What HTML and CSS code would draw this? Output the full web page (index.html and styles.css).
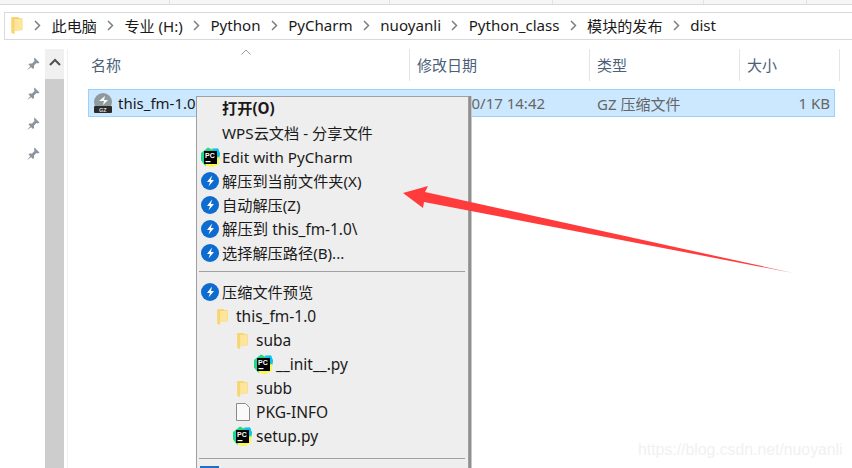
FILE: index.html
```html
<!DOCTYPE html>
<html lang="zh-CN">
<head>
<meta charset="utf-8">
<title>dist</title>
<link rel="stylesheet" href="styles.css">
</head>
<body>
<svg class="defs" width="0" height="0" aria-hidden="true">
  <defs>
    <symbol id="folder" viewBox="0 0 12 18">
      <path d="M1 1h7l1 2h3v11l-8 1H1z" fill="#f8d775"/>
      <path d="M1 3h10.500v10.500L4 15v3l-3-1z" fill="#fde59a"/>
      <path d="M1 2v15l3 1V3h8V2z" fill="#f6cd5f" opacity=".65"/>
    </symbol>
    <symbol id="pc" viewBox="0 0 20 20">
      <path d="M1 6 8 .5l4 2 6-1 2 6-2 9-5 3-8-1-4-5z" fill="#21d789"/>
      <path d="M12 1.500l6 0 2 5-1 3-4-1z" fill="#07c3f2"/>
      <path d="M5 15l14-5 0 7-6 3-7-1z" fill="#fcf84a"/>
      <rect x="4" y="4" width="13" height="13" fill="#000"/>
      <text x="5" y="11" class="pc-text">PC</text>
      <rect x="5.500" y="14" width="5" height="1.200" fill="#fff"/>
    </symbol>
    <symbol id="zip" viewBox="0 0 18 18">
      <circle cx="9" cy="9" r="9" fill="#0f6ccf"/>
      <path d="M11 3.500 6 10h3l-1.500 4.500L13 8h-3z" fill="#fff"/>
    </symbol>
    <symbol id="pin" viewBox="0 0 14 14">
      <path d="M8.500 0.500 13.500 5.500 12 6.500 10.500 6 8 8.500 8 11 7 12 2.500 7.500 3.500 6.500 6 6.500 8.500 4 8 2z" fill="#8c959e"/>
      <path d="M4.500 9 1 13 5.500 10z" fill="#8c959e"/>
    </symbol>
    <symbol id="chev" viewBox="0 0 7 11">
      <path d="M1 1l4.500 4.500L1 10" fill="none" stroke="#7f7f7f" stroke-width="1.500"/>
    </symbol>
  </defs>
</svg>

<div class="tabs">
  <span class="tab tab-a"></span><span class="tab tab-b"></span><span class="tab tab-c"></span><span class="tab tab-d"></span><span class="tab tab-e"></span>
</div>

<nav class="address">
  <svg class="addr-folder"><use href="#folder"/></svg>
  <svg class="chev"><use href="#chev"/></svg><span>此电脑</span>
  <svg class="chev"><use href="#chev"/></svg><span>专业 (H:)</span>
  <svg class="chev"><use href="#chev"/></svg><span>Python</span>
  <svg class="chev"><use href="#chev"/></svg><span>PyCharm</span>
  <svg class="chev"><use href="#chev"/></svg><span>nuoyanli</span>
  <svg class="chev"><use href="#chev"/></svg><span>Python_class</span>
  <svg class="chev"><use href="#chev"/></svg><span>模块的发布</span>
  <svg class="chev"><use href="#chev"/></svg><span>dist</span>
</nav>

<main class="explorer">
  <aside class="pins">
    <svg class="pin"><use href="#pin"/></svg>
    <svg class="pin"><use href="#pin"/></svg>
    <svg class="pin"><use href="#pin"/></svg>
    <svg class="pin"><use href="#pin"/></svg>
  </aside>
  <div class="scrollbar">
    <div class="scroll-up"><svg class="scroll-chev" viewBox="0 0 12 8"><path d="M1 7l5-5 5 5" fill="none" stroke="#505050" stroke-width="2"/></svg></div>
    <div class="scroll-thumb"></div>
  </div>
  <section class="files">
    <header class="cols">
      <div class="col col-name"><span>名称</span><svg class="sort" viewBox="0 0 10 6"><path d="M.5 5.500 5 1l4.500 4.500" fill="none" stroke="#9aa0a6"/></svg></div>
      <div class="col col-date"><span>修改日期</span></div>
      <div class="col col-type"><span>类型</span></div>
      <div class="col col-size"><span>大小</span></div>
    </header>
    <div class="row">
      <div class="cell col-name name-cell">
        <svg class="gz" viewBox="0 0 20 20">
          <circle cx="10" cy="9" r="9" fill="#8e9a9e"/>
          <path d="M12 3 6 8l5 0-1 4 5-5-4 0z" fill="#fff"/>
          <rect x="1" y="13" width="18" height="7" rx="1" fill="#2b2b2b"/>
          <text x="6" y="18.600" class="gz-text">GZ</text>
        </svg>
        <span>this_fm-1.0</span>
      </div>
      <div class="cell col-date">2019/10/17 14:42</div>
      <div class="cell col-type">GZ 压缩文件</div>
      <div class="cell col-size size-cell">1 KB</div>
    </div>
  </section>
</main>

<div class="menu">
  <div class="item strong"><span class="label">打开(O)</span></div>
  <div class="item"><span class="label">WPS云文档 - 分享文件</span></div>
  <div class="item latin edit"><svg class="ico pc-ico"><use href="#pc"/></svg><span>Edit with PyCharm</span></div>
  <div class="item"><svg class="ico"><use href="#zip"/></svg><span>解压到当前文件夹(X)</span></div>
  <div class="item"><svg class="ico"><use href="#zip"/></svg><span>自动解压(Z)</span></div>
  <div class="item wide"><svg class="ico"><use href="#zip"/></svg><span>解压到 this_fm-1.0\</span></div>
  <div class="item"><svg class="ico"><use href="#zip"/></svg><span>选择解压路径(B)...</span></div>
  <div class="sep sep-a"></div>
  <div class="item"><svg class="ico"><use href="#zip"/></svg><span>压缩文件预览</span></div>
  <div class="item latin lvl-1"><svg class="tree-folder"><use href="#folder"/></svg><span>this_fm-1.0</span></div>
  <div class="item latin lvl-2"><svg class="tree-folder"><use href="#folder"/></svg><span>suba</span></div>
  <div class="item latin lvl-3"><svg class="ico pc-ico"><use href="#pc"/></svg><span>__init__.py</span></div>
  <div class="item latin lvl-2"><svg class="tree-folder"><use href="#folder"/></svg><span>subb</span></div>
  <div class="item latin lvl-2"><svg class="doc" viewBox="0 0 14 18"><path d="M.5.500h9l4 4v13H.5z" fill="#fafafa" stroke="#8a8a8a"/></svg><span>PKG-INFO</span></div>
  <div class="item latin lvl-4"><svg class="ico pc-ico"><use href="#pc"/></svg><span>setup.py</span></div>
  <div class="sep sep-b"></div>
  <div class="tail-icon"></div>
</div>

<svg class="arrow" viewBox="0 0 852 468" aria-hidden="true">
  <path d="M403 193 428 186 425 192 793 273 424 202 423 208z" fill="#ff3b3b"/>
</svg>

<div class="watermark">https://blog.csdn.net/nuoyanli</div>
</body>
</html>
```

FILE: styles.css
```css
* { box-sizing: border-box; }
html, body { margin: 0; height: 468px; overflow: hidden; background: #fff; }
body {
  position: relative;
  width: 852px;
  font-family: "Noto Sans", "Noto Sans CJK SC", sans-serif;
  font-size: 15px;
  color: #1a1a1a;
}
.defs { position: absolute; }
.pc-text { font: 700 7px "Liberation Sans", sans-serif; fill: #fff; }
.gz-text { font: 700 5.500px "Liberation Sans", sans-serif; fill: #ddd; }

.tabs { display: flex; height: 5px; background: #f5f6f7; border-bottom: 1px solid #d9d9d9; }
.tab { border-right: 1px solid #e3e3e3; }
.tab-a { width: 170px; }
.tab-b { width: 220px; }
.tab-c { width: 163px; }
.tab-d { width: 151px; }
.tab-e { width: 103px; }

.address {
  display: flex;
  align-items: center;
  gap: 10.300px;
  height: 28px;
  margin: 7px 0 0 4px;
  padding: 0 0 2px 5px;
  border: 1px solid #d9d9d9;
  border-right: 0;
  font-size: 15.100px;
  white-space: nowrap;
}
.addr-folder { width: 13px; height: 18px; margin-right: 1px; }
.chev { width: 7px; height: 11px; flex: none; }

.explorer { display: flex; height: 428px; margin-top: 9px; }
.pins { width: 45px; display: flex; flex-direction: column; padding: 8px 0 0 26px; gap: 16px; }
.pin { width: 14px; height: 14px; }
.scrollbar { width: 19px; display: flex; flex-direction: column; }
.scroll-up { height: 30px; background: #f0f0f0; display: flex; justify-content: center; padding-top: 9px; }
.scroll-chev { width: 12px; height: 8px; }
.scroll-thumb { flex: 1; background: #cdcdcd; }

.files { flex: 1; margin-left: 3px; border-left: 1px solid #f0f0f0; }
.cols { display: flex; height: 32px; align-items: center; color: #4c607a; }
.col { height: 32px; display: flex; align-items: center; padding: 0 0 2px 7px; border-right: 1px solid #e5e5e5; position: relative; }
.col-name { width: 342px; padding-left: 23px; }
.col-date { width: 180px; }
.col-type { width: 150px; }
.col-size { width: 100px; }
.sort { position: absolute; left: 173px; top: 0; width: 10px; height: 6px; }
.row {
  display: flex;
  height: 28px;
  width: 747px;
  margin: 8px 0 0 20px;
  background: #cce8ff;
  border: 1px solid #99d1ff;
  color: #666;
}
.cell { display: flex; align-items: center; height: 26px; white-space: nowrap; }
.row .col-name { width: 321px; padding-left: 4px; color: #1a1a1a; }
.row .col-date { width: 180px; padding-left: 13px; }
.row .col-type { width: 150px; padding-left: 7px; }
.row .col-size { width: 94px; }
.size-cell { justify-content: flex-end; padding-right: 4px; }
.name-cell { gap: 5px; }
.gz { width: 20px; height: 20px; flex: none; }

.menu {
  position: absolute;
  left: 196px;
  top: 96px;
  width: 273px;
  height: 380px;
  background: #eee;
  border: 1px solid #a0a0a0;
  box-shadow: 2px 0 0 #8f8f8f, 3px 0 0 #c8c8c8;
}
.item { height: 24px; display: flex; align-items: center; padding: 0 0 2px 4px; white-space: nowrap; gap: 3px; color: #1a1a1a; font-size: 15.200px; }
.strong { font-weight: 700; padding-bottom: 4px; }
.wide { font-size: 15.400px; }
.latin { padding-bottom: 0; font-size: 15.500px; }
.edit { font-size: 15.200px; }
.label { padding-left: 21px; }
.ico { width: 18px; height: 18px; flex: none; margin-top: 2px; }
.pc-ico { width: 20px; height: 20px; margin: 0 -1px 0 -1px; }
.tree-folder { width: 12px; height: 17px; flex: none; margin-top: 1px; }
.doc { width: 14px; height: 18px; flex: none; }
.lvl-1 { padding-left: 19px; gap: 8px; }
.lvl-2 { padding-left: 39px; gap: 8px; }
.lvl-2 .doc { margin-right: -2px; }
.lvl-3 { padding-left: 57px; gap: 4px; }
.lvl-4 { padding-left: 36px; gap: 5px; }
.sep { height: 1px; background: #a0a0a0; margin: 0 3px 0 2px; }
.sep-a { margin-top: 6px; margin-bottom: 8px; }
.sep-b { margin-top: 10px; }
.tail-icon { width: 19px; height: 6px; margin: 7px 0 0 3px; background: #1f6fc4; }

.arrow { position: absolute; left: 0; top: 0; width: 852px; height: 468px; pointer-events: none; }
.watermark {
  position: absolute;
  left: 638px;
  top: 441px;
  font: 15.800px "Liberation Sans", sans-serif;
  color: #f1f1f1;
  white-space: nowrap;
}
```
